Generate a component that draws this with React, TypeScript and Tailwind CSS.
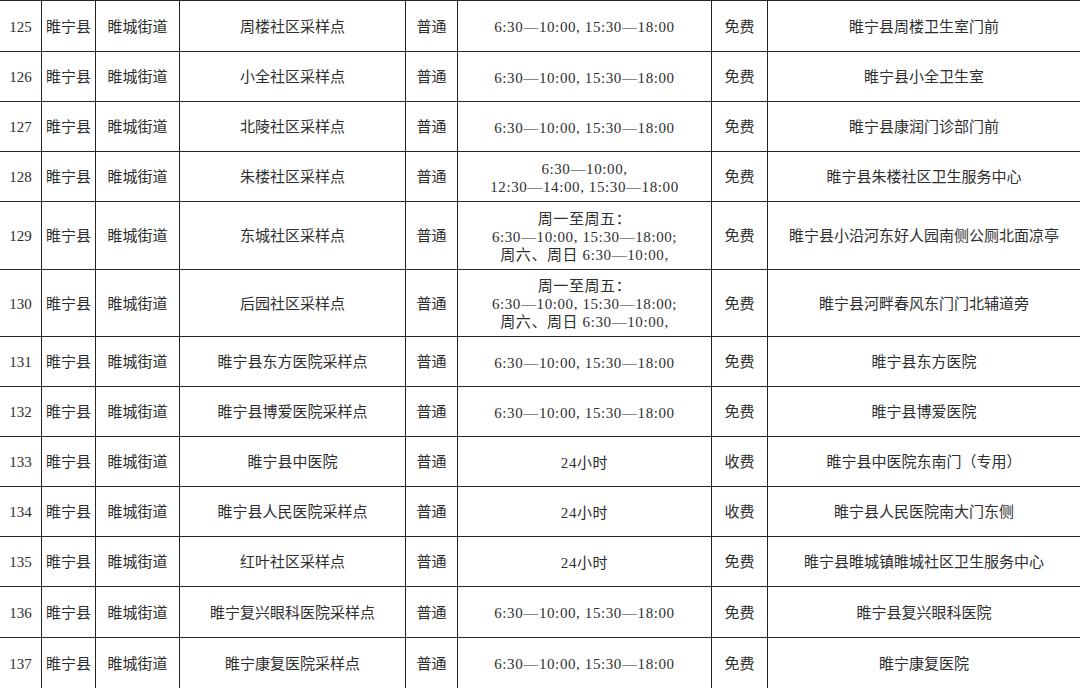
import React from 'react';

type Row = {
  no: number;
  name: string;
  hours: string[];
  fee: string;
  place: string;
  h: string;
};

const rows: Row[] = [
  { no: 125, name: '周楼社区采样点', hours: ['6:30—10:00, 15:30—18:00'], fee: '免费', place: '睢宁县周楼卫生室门前', h: 'h-[51px]' },
  { no: 126, name: '小全社区采样点', hours: ['6:30—10:00, 15:30—18:00'], fee: '免费', place: '睢宁县小全卫生室', h: 'h-[50px]' },
  { no: 127, name: '北陵社区采样点', hours: ['6:30—10:00, 15:30—18:00'], fee: '免费', place: '睢宁县康润门诊部门前', h: 'h-[50px]' },
  { no: 128, name: '朱楼社区采样点', hours: ['6:30—10:00,', '12:30—14:00, 15:30—18:00'], fee: '免费', place: '睢宁县朱楼社区卫生服务中心', h: 'h-[50px]' },
  { no: 129, name: '东城社区采样点', hours: ['周一至周五：', '6:30—10:00, 15:30—18:00;', '周六、周日 6:30—10:00,'], fee: '免费', place: '睢宁县小沿河东好人园南侧公厕北面凉亭', h: 'h-[68px]' },
  { no: 130, name: '后园社区采样点', hours: ['周一至周五：', '6:30—10:00, 15:30—18:00;', '周六、周日 6:30—10:00,'], fee: '免费', place: '睢宁县河畔春风东门门北辅道旁', h: 'h-[67px]' },
  { no: 131, name: '睢宁县东方医院采样点', hours: ['6:30—10:00, 15:30—18:00'], fee: '免费', place: '睢宁县东方医院', h: 'h-[50px]' },
  { no: 132, name: '睢宁县博爱医院采样点', hours: ['6:30—10:00, 15:30—18:00'], fee: '免费', place: '睢宁县博爱医院', h: 'h-[50px]' },
  { no: 133, name: '睢宁县中医院', hours: ['24小时'], fee: '收费', place: '睢宁县中医院东南门（专用）', h: 'h-[50px]' },
  { no: 134, name: '睢宁县人民医院采样点', hours: ['24小时'], fee: '收费', place: '睢宁县人民医院南大门东侧', h: 'h-[50px]' },
  { no: 135, name: '红叶社区采样点', hours: ['24小时'], fee: '免费', place: '睢宁县睢城镇睢城社区卫生服务中心', h: 'h-[50px]' },
  { no: 136, name: '睢宁复兴眼科医院采样点', hours: ['6:30—10:00, 15:30—18:00'], fee: '免费', place: '睢宁县复兴眼科医院', h: 'h-[51px]' },
  { no: 137, name: '睢宁康复医院采样点', hours: ['6:30—10:00, 15:30—18:00'], fee: '免费', place: '睢宁康复医院', h: 'h-[51px]' },
];

const cell = 'border border-[#262626] text-center align-middle px-0 pt-[2px] pb-0';

export default function App() {
  return (
    <div
      className="w-[1080px] h-[688px] overflow-hidden bg-white text-[#2e2e2e] text-[15px]"
      style={{ fontFamily: '"Liberation Serif", "Noto Sans CJK SC", serif' }}
    >
      <table className="table-fixed border-collapse w-[1090px] -ml-px">
        <colgroup>
          <col className="w-[42px]" />
          <col className="w-[54px]" />
          <col className="w-[84px]" />
          <col className="w-[226px]" />
          <col className="w-[52px]" />
          <col className="w-[254px]" />
          <col className="w-[56px]" />
          <col className="w-[322px]" />
        </colgroup>
        <tbody>
          {rows.map((r) => (
            <tr key={r.no} className={r.h}>
              <td className={cell}>{r.no}</td>
              <td className={cell}>睢宁县</td>
              <td className={cell}>睢城街道</td>
              <td className={cell}>{r.name}</td>
              <td className={cell}>普通</td>
              <td className={`${cell} leading-[18px] tracking-[0.6px]`}>
                {r.hours.map((line, i) => (
                  <div key={i}>{line}</div>
                ))}
              </td>
              <td className={cell}>{r.fee}</td>
              <td className={`${cell} pr-[9px]`}>{r.place}</td>
            </tr>
          ))}
        </tbody>
      </table>
    </div>
  );
}
